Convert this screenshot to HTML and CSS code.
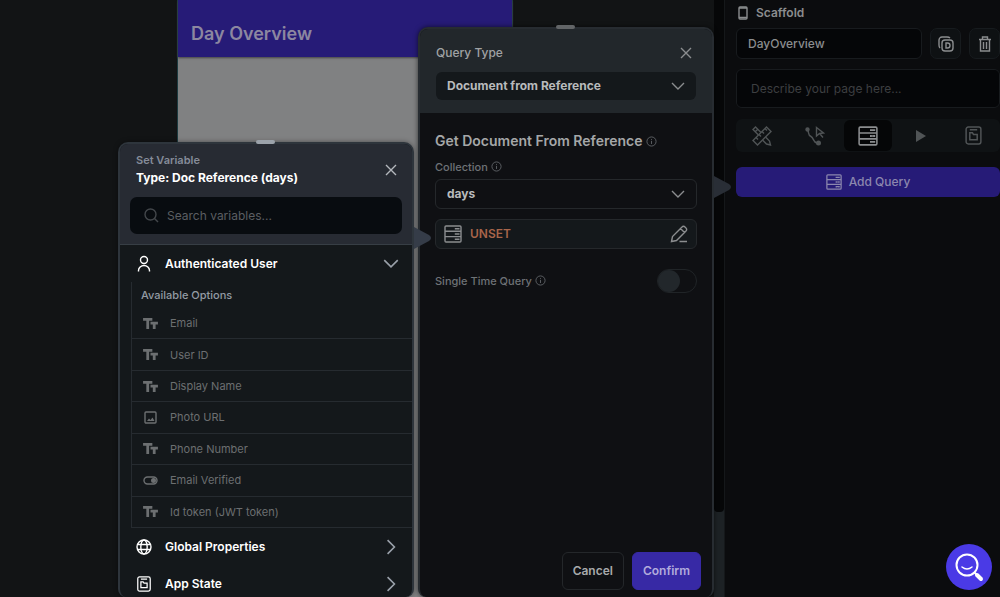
FILE: index.html
```html
<!DOCTYPE html>
<html lang="en">
<head>
  <meta charset="UTF-8">
  <meta name="viewport" content="width=device-width, initial-scale=1">
  <title>DayOverview</title>
  <link rel="stylesheet" href="styles.css">
</head>
<body>
  <!-- Shared icons -->
  <svg class="sprite" aria-hidden="true">
    <symbol id="i-close" viewBox="0 0 12 12"><path d="M1 1l10 10M11 1L1 11"/></symbol>
    <symbol id="i-down" viewBox="0 0 14 8"><path d="M1 1l6 6 6-6"/></symbol>
    <symbol id="i-right" viewBox="0 0 8 14"><path d="M1 1l6 6-6 6"/></symbol>
    <symbol id="i-text" viewBox="0 0 16 14"><path d="M0 1h10v3H6.500v9h-3V4H0zM8 5h8v3h-2.500v5h-3V8H8z" fill="currentColor" stroke="none"/></symbol>
    <symbol id="i-info" viewBox="0 0 12 12"><circle cx="6" cy="6" r="5"/><path d="M6 5.300v3.400M6 3.200v1"/></symbol>
    <symbol id="i-query" viewBox="0 0 18 18"><rect x="1" y="1" width="16" height="16" rx="1"/><path d="M1 6.300h16M1 11.600h16M11.500 3v1.600M14.500 3v1.600M11.500 8.200v1.600M14.500 8.200v1.600M11.500 13.500v1.600M14.500 13.500v1.600M11 3.700h4.500M11 9h4.500M11 14.300h4.500"/></symbol>
    <symbol id="i-state" viewBox="0 0 16 18"><rect x="1" y="1" width="14" height="16" rx="2"/><path d="M4.500 3.500h7M4.500 6.500h2.500l1 1.500h3.500v5h-7z"/></symbol>
  </svg>

  <div class="workspace">
    <main class="canvas">
      <div class="phone">
        <h1 class="phone-bar">Day Overview</h1>
      </div>
    </main>
    <div class="scroll-track"><div class="scroll-thumb"></div></div>

    <!-- Properties panel -->
    <aside class="panel">
      <h2 class="panel-title">
        <svg class="icon" width="10" height="14" viewBox="0 0 10 14"><rect x="1" y="1" width="8" height="12" rx="1"/><path d="M1 2h8M1 11.500h8"/></svg>
        Scaffold
      </h2>
      <div class="name-row">
        <input class="name-input" type="text" value="DayOverview" aria-label="Page name">
        <button class="icon-button" aria-label="Duplicate">
          <svg class="icon" width="16" height="16" viewBox="0 0 16 16"><rect x="4" y="4" width="11" height="11" rx="3"/><path d="M2 12C1 11 1 10 1 9V4a3 3 0 0 1 3-3h5c1 0 2 0 3 1M8 7v5h1.500a2.500 2.500 0 0 0 0-5z"/></svg>
        </button>
        <button class="icon-button" aria-label="Delete">
          <svg class="icon" width="14" height="16" viewBox="0 0 14 16"><path d="M1 3.500h12M4.500 3V1h5v2M2.500 4v11h9V4M5.500 6v7M8.500 6v7"/></svg>
        </button>
      </div>
      <textarea class="description" rows="1" placeholder="Describe your page here..." aria-label="Description"></textarea>
      <nav class="tabs">
        <button class="tab" aria-label="Design">
          <svg class="icon" width="20" height="20" viewBox="0 0 20 20"><path d="M1 14.500L14.500 1 19 5.500 5.500 19zM4 11.500l2 2M7 8.500l2 2M10 5.500l2 2M13 2.500l2 2"/><path d="M6.500 9L1 3.500 3.500 1 9 6.500M13.500 11l4 4 1 4-4-1-4-4M3 6l3-3"/></svg>
        </button>
        <button class="tab" aria-label="Actions">
          <svg class="icon" width="20" height="20" viewBox="0 0 20 20"><circle cx="2.500" cy="3.500" r="1.500" fill="currentColor"/><circle cx="13.500" cy="17" r="1.800" fill="currentColor"/><path d="M3 4c1 4 0 5 3 6.500s2 6 6 6.500M11.500 1.500l7 5.500-4 .5-3 2.500zM15 8l3 3.500"/></svg>
        </button>
        <button class="tab active" aria-label="Queries"><svg class="icon" width="20" height="20"><use href="#i-query"/></svg></button>
        <button class="tab" aria-label="Preview">
          <svg width="10" height="12" viewBox="0 0 10 12"><path d="M0 0l10 6-10 6z" fill="currentColor"/></svg>
        </button>
        <button class="tab" aria-label="State"><svg class="icon" width="17" height="19"><use href="#i-state"/></svg></button>
      </nav>
      <button class="add-query"><svg class="icon" width="16" height="16"><use href="#i-query"/></svg>Add Query</button>
    </aside>
  </div>

  <!-- Query popup -->
  <section class="popup query-popup">
    <span class="grip"></span>
    <header class="popup-header">
      <div class="title-row">
        <label class="label" for="queryType">Query Type</label>
        <button class="close" aria-label="Close"><svg class="icon" width="12" height="12"><use href="#i-close"/></svg></button>
      </div>
      <div class="select-box filled">
        <select id="queryType"><option>Document from Reference</option></select>
        <svg class="icon" width="14" height="8"><use href="#i-down"/></svg>
      </div>
    </header>
    <div class="query-body">
      <h2 class="query-title">Get Document From Reference <svg class="icon info" width="11" height="11"><use href="#i-info"/></svg></h2>
      <label class="field-label" for="collection">Collection <svg class="icon info" width="11" height="11"><use href="#i-info"/></svg></label>
      <div class="select-box">
        <select id="collection"><option>days</option></select>
        <svg class="icon" width="14" height="8"><use href="#i-down"/></svg>
      </div>
      <button class="unset">
        <svg class="icon" width="18" height="18"><use href="#i-query"/></svg>
        <span>UNSET</span>
        <svg class="icon" width="18" height="18" viewBox="0 0 18 18"><path d="M1.500 16.500l1-5L12 2a2 2 0 0 1 3 0l1 1a2 2 0 0 1 0 3l-9.500 9.500zM10.500 3.500l4 4M9.500 16.500H17"/></svg>
      </button>
      <div class="switch-row">
        <label class="field-label" for="single">Single Time Query <svg class="icon info" width="11" height="11"><use href="#i-info"/></svg></label>
        <input id="single" class="switch" type="checkbox">
      </div>
    </div>
    <footer class="popup-footer">
      <button class="button">Cancel</button>
      <button class="button primary">Confirm</button>
    </footer>
    <svg class="pointer" width="17" height="22" viewBox="0 0 17 22"><path d="M0 0l15 8q4 3 0 6L0 22z"/></svg>
  </section>

  <!-- Variable popup -->
  <section class="popup variable-popup">
    <span class="grip"></span>
    <header class="popup-header">
      <div class="title-row">
        <div>
          <p class="eyebrow">Set Variable</p>
          <h2 class="variable-title">Type: Doc Reference (days)</h2>
        </div>
        <button class="close" aria-label="Close"><svg class="icon" width="12" height="12"><use href="#i-close"/></svg></button>
      </div>
      <div class="search">
        <svg class="icon" width="15" height="15" viewBox="0 0 15 15"><circle cx="6.500" cy="6.500" r="5.500"/><path d="M10.500 10.500L14 14"/></svg>
        <input type="text" placeholder="Search variables..." aria-label="Search variables">
      </div>
    </header>
    <button class="group">
      <svg class="icon" width="16" height="18" viewBox="0 0 16 18"><circle cx="8" cy="5" r="3.500"/><path d="M2.500 16.500v-1a5.500 5 0 0 1 11 0v1"/></svg>
      <span>Authenticated User</span>
      <svg class="icon chevron" width="16" height="9"><use href="#i-down"/></svg>
    </button>
    <div class="options">
      <p class="options-title">Available Options</p>
      <ul class="option-list">
        <li><svg class="icon" width="15" height="13"><use href="#i-text"/></svg>Email</li>
        <li><svg class="icon" width="15" height="13"><use href="#i-text"/></svg>User ID</li>
        <li><svg class="icon" width="15" height="13"><use href="#i-text"/></svg>Display Name</li>
        <li><svg class="icon" width="15" height="13" viewBox="0 0 15 13"><rect x="2" y="1" width="11" height="11" rx="1"/><path d="M4 10l2-2.500 1.500 1.500 2-2.500L11.500 10z" fill="currentColor" stroke="none"/></svg>Photo URL</li>
        <li><svg class="icon" width="15" height="13"><use href="#i-text"/></svg>Phone Number</li>
        <li><svg class="icon" width="15" height="13" viewBox="0 0 15 13"><rect x="1" y="3" width="13" height="7" rx="3.500"/><circle cx="10.500" cy="6.500" r="2.500" fill="currentColor" stroke="none"/></svg>Email Verified</li>
        <li><svg class="icon" width="15" height="13"><use href="#i-text"/></svg>Id token (JWT token)</li>
      </ul>
    </div>
    <button class="group">
      <svg class="icon" width="16" height="16" viewBox="0 0 16 16"><circle cx="8" cy="8" r="7"/><ellipse cx="8" cy="8" rx="3.200" ry="7"/><path d="M1.500 5.500h13M1.500 10.500h13"/></svg>
      <span>Global Properties</span>
      <svg class="icon chevron" width="16" height="16"><use href="#i-right"/></svg>
    </button>
    <button class="group">
      <svg class="icon" width="16" height="16"><use href="#i-state"/></svg>
      <span>App State</span>
      <svg class="icon chevron" width="16" height="16"><use href="#i-right"/></svg>
    </button>
    <svg class="pointer" width="17" height="22" viewBox="0 0 17 22"><path d="M0 0l15 8q4 3 0 6L0 22z"/></svg>
  </section>

  <button class="help" aria-label="Search help">
    <svg width="30" height="30" viewBox="0 0 30 30" fill="none" stroke="#fff" stroke-linecap="round"><circle cx="13" cy="13" r="10.500" stroke-width="2"/><path d="M8 15q5 4 10 0" stroke-width="1.500"/><path d="M20.500 20.500l2 2" stroke-width="2"/><path d="M23 23l4 4" stroke-width="4"/></svg>
  </button>
</body>
</html>
```

FILE: styles.css
```css
* {
  box-sizing: border-box;
}

body {
  margin: 0;
  height: 100vh;
  overflow: hidden;
  background: #0b0c0e;
  color: #8b8d8f;
  font-family: Inter, "Liberation Sans", sans-serif;
  font-size: 12px;
  line-height: 16px;
}

h1, h2, p, ul {
  margin: 0;
  padding: 0;
}

button, input, select, textarea {
  margin: 0;
  padding: 0;
  border: none;
  background: none;
  color: inherit;
  font: inherit;
  outline: none;
}

.sprite {
  display: none;
}

.icon {
  flex: none;
  fill: none;
  stroke: currentColor;
  stroke-width: 1.400;
}

.workspace {
  display: flex;
  height: 100%;
}

/* Canvas with the phone preview */
.canvas {
  flex: 1;
  display: flex;
  padding-left: 178px;
  background: #121415;
}

.phone {
  width: 334px;
  background: #808182;
  box-shadow: 0 0 0 1px #1d3b40;
}

.phone-bar {
  height: 57px;
  padding: 22px 13px 0;
  background: #261b77;
  color: #8c87a0;
  font-size: 18px;
  font-weight: 600;
  line-height: 24px;
  box-shadow: 0 1px 2px #444;
}

.scroll-track {
  width: 10px;
  background: #1d2225;
}

.scroll-thumb {
  height: 512px;
  border-radius: 0 0 4px 4px;
  background: #060708;
}

/* Properties panel */
.panel {
  width: 276px;
  padding: 5px 0 0 11px;
  border-left: 1px solid #15181a;
}

.panel-title {
  display: flex;
  align-items: center;
  gap: 8px;
  padding-left: 2px;
  font-size: 12px;
  font-weight: 600;
}

.name-row {
  display: flex;
  gap: 8px;
  margin-top: 7px;
}

.name-input,
.description {
  border: 1px solid #181b1e;
  border-radius: 6px;
  background: #050608;
}

.name-input {
  flex: 1;
  min-width: 0;
  height: 31px;
  padding: 0 11px;
  font-weight: 500;
}

.icon-button {
  display: grid;
  place-items: center;
  width: 31px;
  height: 31px;
  border: 1px solid #171b1e;
  border-radius: 7px;
  background: #0e1113;
}

.description {
  display: block;
  width: 100%;
  height: 39px;
  margin-top: 10px;
  padding: 11px 14px;
  resize: none;
}

.description::placeholder {
  color: #3d3f41;
}

.tabs {
  display: grid;
  grid-template-columns: repeat(5, 1fr);
  margin-top: 11px;
  padding: 1px 0;
  border-radius: 6px;
  background: #0f1214;
  color: #505456;
}

.tab {
  display: grid;
  place-items: center;
  height: 31px;
  margin: 0 2px;
  border-radius: 6px;
}

.tab.active {
  background: #050607;
  color: #8b8d8f;
}

.add-query {
  display: flex;
  align-items: center;
  justify-content: center;
  gap: 7px;
  width: 100%;
  height: 30px;
  margin-top: 15px;
  border-radius: 6px;
  background: #261b77;
  color: #8c87ae;
  font-weight: 500;
}

/* Popups */
.popup {
  position: absolute;
  bottom: 0;
  display: flex;
  flex-direction: column;
  width: 296px;
  border: 2px solid #272c31;
  border-bottom: none;
  border-radius: 10px 10px 8px 8px;
}

.query-popup {
  top: 27px;
  left: 418px;
  background: #0f1013;
  box-shadow: 0 0 5px rgba(0, 0, 0, 0.6);
}

.variable-popup {
  top: 142px;
  left: 118px;
  border-color: #2e353c;
  background: #14181b;
  box-shadow: 0 0 5px rgba(0, 0, 0, 0.4);
}

.grip {
  position: absolute;
  top: -4px;
  left: 50%;
  width: 19px;
  height: 4px;
  margin-left: -10px;
  border-radius: 2px;
  background: #626567;
}

.variable-popup .grip {
  background: #9ba2aa;
}

.pointer {
  position: absolute;
  top: 147px;
  left: 294px;
  fill: #292e36;
}

.variable-popup .pointer {
  top: 83px;
  fill: #353c48;
}

.popup-header {
  border-radius: 8px 8px 0 0;
  background: #22272b;
}

.title-row {
  display: flex;
  align-items: center;
  justify-content: space-between;
}

.close {
  display: grid;
  place-items: center;
  width: 20px;
  height: 20px;
}

.query-popup .popup-header {
  padding: 14px 16px 13px;
}

.label {
  color: #a0a2a4;
  font-weight: 500;
}

.select-box {
  display: grid;
  align-items: center;
  height: 30px;
  border: 1px solid #25282b;
  border-radius: 6px;
}

.select-box select,
.select-box .icon {
  grid-area: 1 / 1;
}

.select-box select {
  width: 100%;
  height: 100%;
  padding: 0 32px 0 11px;
  appearance: none;
  color: #b8babb;
  font-weight: 700;
}

.select-box .icon {
  justify-self: end;
  margin-right: 11px;
  pointer-events: none;
}

.select-box.filled {
  height: 28px;
  margin-top: 9px;
  border: none;
  background: #14181b;
}

.query-body {
  flex: 1;
  padding: 18px 15px;
}

.query-title {
  color: #a5a7a8;
  font-size: 14px;
  font-weight: 600;
  line-height: 20px;
}

.info {
  color: #606468;
  stroke-width: 1;
  vertical-align: -1px;
}

.field-label {
  display: block;
  margin: 8px 0 4px;
  color: #6e7276;
  font-size: 11px;
  font-weight: 500;
}

.unset {
  display: flex;
  align-items: center;
  gap: 8px;
  width: 100%;
  height: 30px;
  margin-top: 10px;
  padding: 0 8px;
  border: 1px solid #25282b;
  border-radius: 6px;
  background: #14181b;
  text-align: left;
}

.unset span {
  flex: 1;
  color: #a8654a;
  font-weight: 600;
}

.switch-row {
  display: flex;
  align-items: center;
  justify-content: space-between;
  margin-top: 20px;
}

.switch-row .field-label {
  margin: 0;
}

.switch {
  width: 40px;
  height: 24px;
  appearance: none;
  border: 1px solid #202427;
  border-radius: 12px;
}

.switch::before {
  content: "";
  display: block;
  width: 22px;
  height: 22px;
  border-radius: 50%;
  background: #22272b;
}

.popup-footer {
  display: flex;
  justify-content: flex-end;
  gap: 8px;
  padding: 0 11px 7px;
}

.button {
  height: 38px;
  padding: 0 10px;
  border: 1px solid #24272a;
  border-radius: 6px;
  color: #a8aaab;
  font-weight: 600;
}

.button.primary {
  border-color: #3729a5;
  background: #3729a5;
  color: #b2abdc;
}

/* Variable popup */
.variable-popup .popup-header {
  padding: 8px 10px 10px;
  border-bottom: 1px solid #373e45;
  background: #272b33;
}

.variable-popup .title-row {
  padding: 0 1px 0 6px;
}

.variable-popup .close {
  color: #b4b8be;
}

.eyebrow {
  color: #858c99;
  font-size: 11px;
  font-weight: 600;
}

.variable-title {
  color: #fff;
  font-size: 12px;
  font-weight: 700;
  line-height: 20px;
}

.search {
  display: flex;
  align-items: center;
  gap: 8px;
  height: 37px;
  margin-top: 9px;
  padding: 0 14px;
  border-radius: 7px;
  background: #080c10;
  color: #43474b;
}

.search input {
  flex: 1;
  min-width: 0;
}

.search input::placeholder {
  color: #5b5e62;
}

.group {
  display: flex;
  flex: none;
  align-items: center;
  gap: 13px;
  height: 37px;
  padding: 0 13px 0 16px;
  color: #fff;
  font-weight: 600;
  text-align: left;
}

.group span {
  flex: 1;
}

.group .chevron {
  color: #9aa1aa;
}

.options {
  margin-left: 11px;
  border-left: 1px solid #262b30;
}

.options-title {
  padding: 5px 9px;
  color: #939ba4;
  font-size: 11px;
  font-weight: 500;
}

.option-list {
  display: grid;
  grid-auto-rows: 1fr;
  height: 220px;
  list-style: none;
}

.option-list li {
  display: flex;
  align-items: center;
  gap: 12px;
  padding-left: 11px;
  border-bottom: 1px solid #262b30;
  color: #6c6f71;
  font-size: 11px;
}

/* Floating help button */
.help {
  position: absolute;
  right: 8px;
  bottom: 7px;
  display: grid;
  place-items: center;
  width: 46px;
  height: 46px;
  border-radius: 50%;
  background: #4a3ae6;
}
```
